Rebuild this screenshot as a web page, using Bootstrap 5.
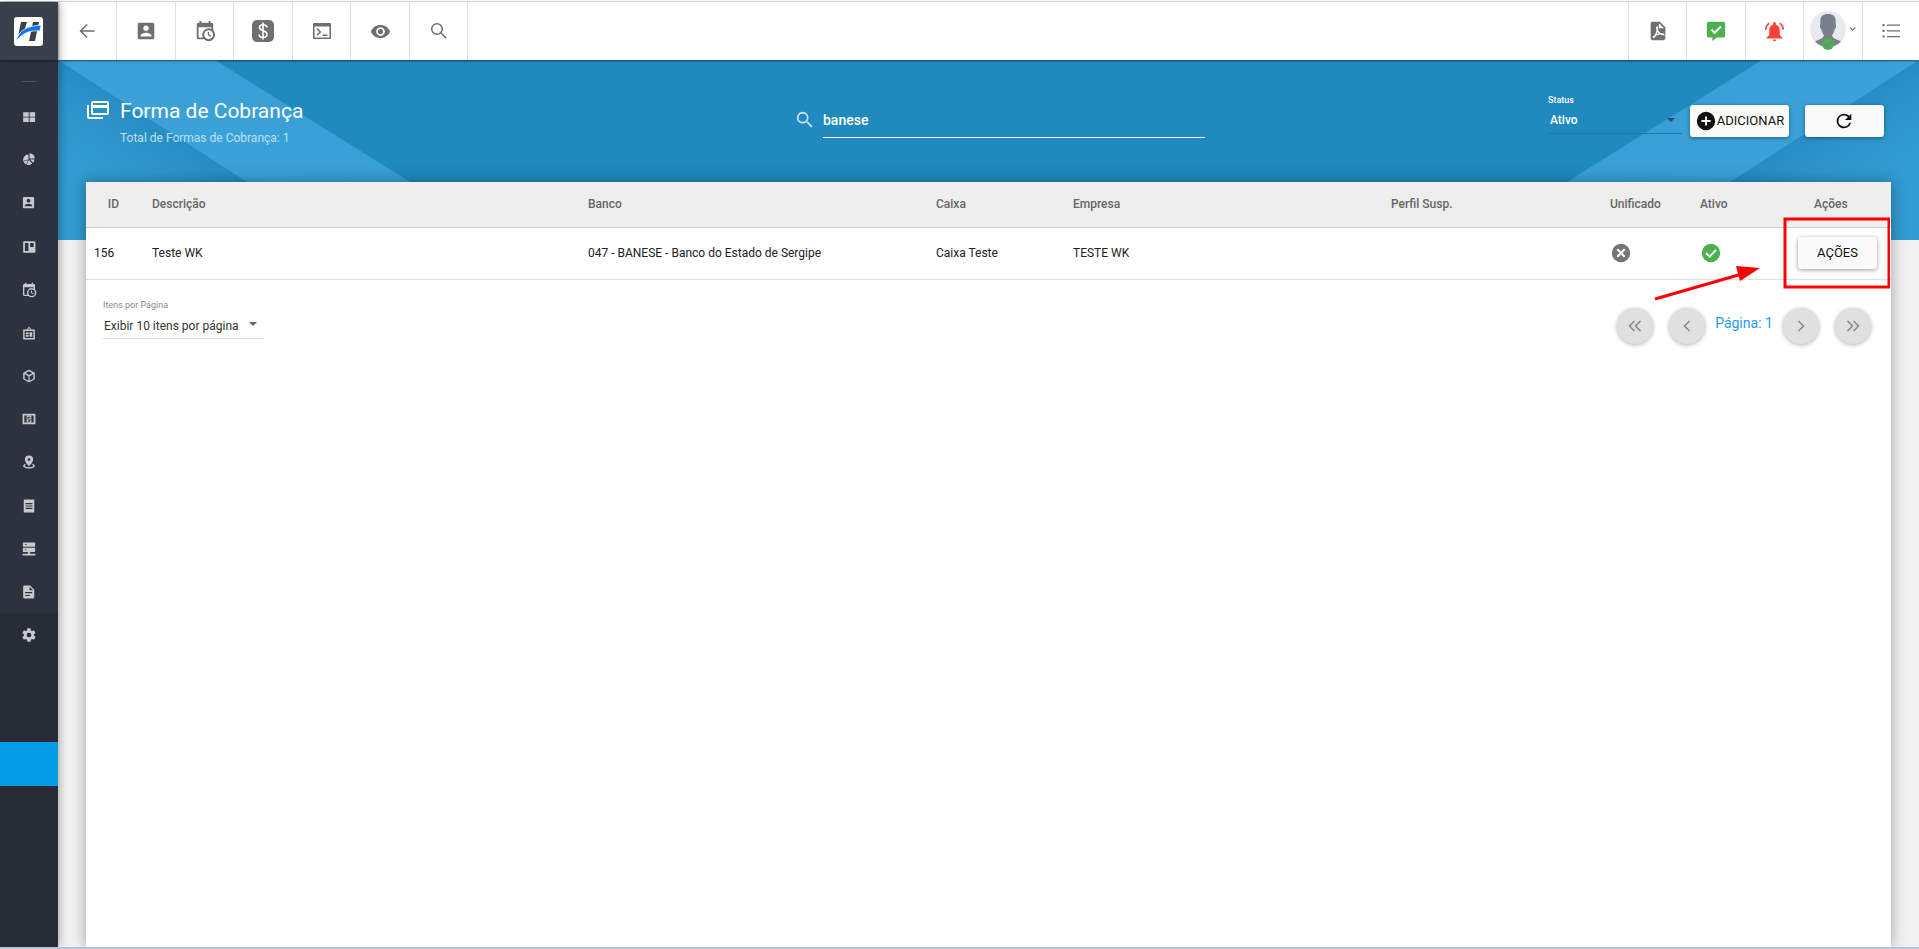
<!DOCTYPE html>
<html lang="pt-BR">
<head>
<meta charset="utf-8">
<meta name="viewport" content="width=device-width, initial-scale=1">
<title>Forma de Cobrança</title>
<link href="https://cdn.jsdelivr.net/npm/bootstrap@5.3.0/dist/css/bootstrap.min.css" rel="stylesheet">
<style>
  body { font-family: Roboto, "Liberation Sans", sans-serif; font-size: 12px; line-height: 16px; color: #212121; background: #f2f2f2; border-top: 1px solid #fafafa; border-bottom: 2px solid #b4c6d6; }
  .app-shell { border-top: 1px solid #dedede; }
  svg { fill: currentColor; display: block; flex: none; }
  .side-rail { width: 58px; background: #2d323e; box-shadow: 0 0 10px rgba(0,0,0,.4); z-index: 3; }
  .side-brand { height: 58px; padding-right: 2px; background: #393f4b; box-shadow: 0 1px 3px rgba(0,0,0,.5); color: #3c3f44; }
  .side-rule { width: 14px; border-top: 1px solid #50545f; margin: 21px auto 13px; }
  .side-link { height: 43px; color: #c8c9cf; padding-right: 1px; }
  .side-group { padding-top: 1px; }
  .side-bottom { background: #282c37; }
  .side-active { background: #039be5; margin-top: 86px; height: 44px; }
  .top-bar { height: 58px; background: #fff; box-shadow: 0 1px 2px rgba(0,0,0,.5); z-index: 2; }
  .tool-btn { width: 58px; border: 0; border-right: 1px solid #e0e0e0; background: none; color: #6f6f6f; padding: 0; }
  .tool-btn.wide { width: 59px; }
  .tool-end .tool-btn { border-right: 0; border-left: 1px solid #e0e0e0; }
  .tool-end .tool-btn:last-child { width: 57px; }
  .hero { height: 180px; background: #2089be; color: #fff; margin-bottom: -58px; padding: 0 35px 0 28px; overflow: hidden; }
  .hero-art { height: 180px; width: 560px; top: 0; }
  .hero-icon { margin: 17px 7px 0 1px; }
  .hero-title { font-size: 21px; line-height: 30px; font-weight: 400; }
  .hero-sub { color: #bfe0f2; line-height: 16px; }
  .search-wrap { padding: 26px 0 0 30px; }
  .search-box { width: 382px; height: 36px; background: none; border: 0; border-bottom: 1px solid #fff; color: #fff; font-size: 14px; font-weight: 500; padding: 0; outline: 0; }
  .field-select { appearance: none; border: 0; background: none; font-size: 12px; line-height: 20px; outline: 0; padding: 0; }
  .status-field { width: 134px; font-size: 9px; line-height: 12px; padding-top: 5px; }
  .status-field .field-select { color: #fff; height: 25px; font-weight: 500; padding: 0 0 2px 2px; margin-top: 3px; border-bottom: 1px solid #1d7cab; border-radius: 0; }
  .status-field .caret { top: 29px; }
  .hero-actions { padding-top: 29px; }
  .raised { background: #fafafa; border: 0; border-radius: 3px; color: #111; box-shadow: 0 1px 4px rgba(0,0,0,.4); padding: 0; height: 32px; font-size: 13px; }
  .raised.short { width: 79px; }
  .raised.long { width: 99px; }
  .panel { background: #fff; margin: 0 28px; box-shadow: 0 0 14px rgba(0,0,0,.35); z-index: 1; }
  .grid-table { table-layout: fixed; }
  .grid-table th { background: #eee; color: #666; font-weight: 500; height: 45px; padding: 0 8px; border-bottom: 1px solid #d0d0d0; vertical-align: middle; }
  .grid-table th:first-child { padding-right: 25px; }
  .grid-table th, .grid-table td { white-space: nowrap; }
  .grid-table td { height: 52px; padding: 0 8px; border-bottom: 1px solid #e0e0e0; vertical-align: middle; }
  .page-size { width: 161px; color: #8a8a8a; font-size: 9px; line-height: 10px; margin: 20px 0 0 17px; }
  .page-size .field-select { color: #333; height: 29px; padding: 4px 0 0 1px; border-bottom: 1px solid #e0e0e0; border-radius: 0; }
  .page-btn { width: 36px; height: 36px; border: 0; border-radius: 50%; background: #e0e0e0; color: #8c8c8c; box-shadow: 0 1px 4px rgba(0,0,0,.3); padding: 0; }
  .page-no { color: #1e9bf0; font-size: 14px; width: 78px; line-height: 38px; }
  .caret { right: 7px; }
  .callout-art { top: 35px; right: 1px; width: 240px; height: 85px; pointer-events: none; }
</style>
</head>
<body class="d-flex flex-column min-vh-100">
<svg width="0" height="0" class="position-absolute" aria-hidden="true">
  <symbol id="account" viewBox="0 0 24 24"><path d="M3 5v14c0 1.100.9 2 2 2h14c1.100 0 2-.9 2-2V5c0-1.100-.9-2-2-2H5c-1.100 0-2 .9-2 2zm12 4c0 1.660-1.340 3-3 3s-3-1.340-3-3 1.340-3 3-3 3 1.340 3 3zm-9 8c0-2 4-3.100 6-3.100s6 1.100 6 3.100v1H6z"/></symbol>
  <symbol id="calclock" viewBox="0 0 24 24"><path d="M15 13h1.500v2.800l2.400 1.400-.7 1.300-3.200-1.900zM19 8H5v11h4.700A7 7 0 0 1 19 9.700zM5 21a2 2 0 0 1-2-2V5c0-1.100.9-2 2-2h1V1h2v2h8V1h2v2h1a2 2 0 0 1 2 2v6.100A7 7 0 0 1 11.100 21zm11-9.800a4.800 4.800 0 1 0 0 9.700 4.800 4.800 0 0 0 0-9.700z"/></symbol>
</svg>
<div class="app-shell d-flex flex-grow-1">
  <nav class="side-rail d-flex flex-column position-relative flex-shrink-0" aria-label="Menu">
    <a href="#" class="side-brand d-flex align-items-center justify-content-center" aria-label="Início">
      <svg width="29" height="29" viewBox="0 0 29 29"><rect width="29" height="29" rx="3" fill="#fff"/><path d="M7 5h6l-2.500 8-6 4zM19 5h6l-4 19h-6l2-9z" fill="#3c3f44"/><path d="M2 24C5 13 13 9 27 8l-1 6C16 13 9 16 2 24z" fill="#0878f0" stroke="#fff" stroke-width=".7"/></svg>
    </a>
    <div class="side-rule"></div>
    <div>
      <a href="#" class="side-link d-flex align-items-center justify-content-center" aria-label="Painel"><svg width="14" height="14" viewBox="0 0 24 24"><path d="M2 4h9.500v7.500H2zM13 4h9.500v7.500H13zM2 13h9.500v7.500H2zM13 13h9.500v7.500H13z"/></svg></a>
      <a href="#" class="side-link d-flex align-items-center justify-content-center" aria-label="Gráficos"><svg width="13" height="13" viewBox="0 0 24 24"><path d="M12 3v9.500l6.700 6.700A9.600 9.600 0 1 1 12 3z"/><path d="M14 .500A10 10 0 0 1 23.500 10H14zM14.500 12H23a9 9 0 0 1-2.500 6z"/><path d="M12 12.500L8 22M12 12.500L3 15" stroke="#2d323e" stroke-width="1.200"/></svg></a>
      <a href="#" class="side-link d-flex align-items-center justify-content-center" aria-label="Clientes"><svg width="15" height="15"><use href="#account"/></svg></a>
    </div>
    <div class="side-group">
      <a href="#" class="side-link d-flex align-items-center justify-content-center" aria-label="Quadro"><svg width="14" height="14" viewBox="0 0 24 24"><path fill-rule="evenodd" d="M4 2h17a2 2 0 0 1 2 2v16a2 2 0 0 1-2 2H4a2 2 0 0 1-2-2V4a2 2 0 0 1 2-2zm1 3v14h6V5zm9 0v7h6V5z"/></svg></a>
      <a href="#" class="side-link d-flex align-items-center justify-content-center" aria-label="Agenda"><svg width="16" height="16"><use href="#calclock"/></svg></a>
      <a href="#" class="side-link d-flex align-items-center justify-content-center" aria-label="Crachás"><svg width="14" height="14" viewBox="0 0 24 24"><path fill-rule="evenodd" d="M2 6h6l4-5 4 5h6v17H2zm2.500 2.500v12h15v-12zM12 3.500L10 6h4zM6.500 10.500h5v3h-5zm0 4.500h5v3.500h-5zm6.500-4.500h4.500v8H13z"/></svg></a>
      <a href="#" class="side-link d-flex align-items-center justify-content-center" aria-label="Produtos"><svg width="14" height="14" viewBox="0 0 24 24"><path d="M12 1l10 5.500v11L12 23 2 17.500v-11zM6 7l6 3.200L18 7l-6-3.200zm-1.500 2v7.500L11 20v-7.500zm15 0L13 12.500V20l6.500-3.500z" fill-rule="evenodd"/></svg></a>
      <a href="#" class="side-link d-flex align-items-center justify-content-center" aria-label="Financeiro"><svg width="14" height="14" viewBox="0 0 24 24"><path fill-rule="evenodd" d="M1 3h22v18H1zm3 3v12h16V6z"/><path fill-rule="evenodd" d="M8 6h8v12H8zm3 1.500v1H9.500V13H13v1.500H9.500V16H11v1h2v-1h1.500v-4.500H11V10h3.500V8.500H13v-1z"/></svg></a>
      <a href="#" class="side-link d-flex align-items-center justify-content-center" aria-label="Mapa"><svg width="14" height="14" viewBox="0 0 24 24"><path fill-rule="evenodd" d="M12 1a7 7 0 0 1 7 7c0 4.500-7 11-7 11S5 12.500 5 8a7 7 0 0 1 7-7zm0 4.500a2.300 2.300 0 1 0 0 4.700 2.300 2.300 0 0 0 0-4.700z"/><path d="M6 16c-6 3-1.500 6 6 6s12-3 6-6" fill="none" stroke="currentColor" stroke-width="2.500"/></svg></a>
    </div>
    <div class="side-group">
      <a href="#" class="side-link d-flex align-items-center justify-content-center" aria-label="Recibos"><svg width="14" height="14" viewBox="0 0 24 24"><path fill-rule="evenodd" d="M3 1h18v22H3zm3 6v2h12V7zm0 4v2h12v-2zm0 4v2h12v-2z"/></svg></a>
      <a href="#" class="side-link d-flex align-items-center justify-content-center" aria-label="Servidores"><svg width="14" height="14" viewBox="0 0 24 24"><path fill-rule="evenodd" d="M1.500 1h21v7h-21zM5 4v1h3V4zM1.500 10h21v7H14v3h9v3H1v-3h9v-3H1.500zM5 13v1h3v-1z"/></svg></a>
      <a href="#" class="side-link d-flex align-items-center justify-content-center" aria-label="Documentos"><svg width="14" height="14" viewBox="0 0 24 24"><path fill-rule="evenodd" d="M4 1h10l7 7v13a2 2 0 0 1-2 2H4a2 2 0 0 1-2-2V3a2 2 0 0 1 2-2zm9 2v6h6zM5.500 12v2h12v-2zm0 5v2h8v-2z"/></svg></a>
    </div>
    <div class="side-bottom flex-grow-1">
      <a href="#" class="side-link d-flex align-items-center justify-content-center" aria-label="Configurações"><svg width="16" height="16" viewBox="0 0 24 24"><path d="M19.400 13c.1-.6.100-1.300 0-2l2.100-1.600c.2-.2.300-.4.100-.7l-2-3.400c-.1-.2-.4-.3-.6-.2l-2.500 1a7 7 0 0 0-1.700-1l-.4-2.600a.5.5 0 0 0-.5-.5h-4a.5.5 0 0 0-.5.500L9 5.100c-.6.300-1.200.6-1.700 1l-2.500-1c-.2-.1-.5 0-.6.200l-2 3.400c-.1.300 0 .5.100.7L4.400 11c-.1.700-.1 1.400 0 2l-2.100 1.600c-.2.200-.2.400-.1.700l2 3.400c.1.200.4.300.6.200l2.500-1c.5.400 1.100.8 1.700 1l.4 2.600c0 .3.200.5.500.5h4c.3 0 .5-.2.500-.5l.4-2.600c.6-.2 1.200-.6 1.700-1l2.500 1c.2.100.5 0 .6-.2l2-3.400c.2-.3.100-.5-.1-.7zM12 15.500a3.500 3.500 0 1 1 0-7 3.500 3.500 0 0 1 0 7z"/></svg></a>
      <a href="#" class="side-link side-active d-block" aria-label="Selecionado"></a>
    </div>
  </nav>

  <div class="d-flex flex-column flex-grow-1">
    <header class="top-bar d-flex justify-content-between position-relative">
      <div class="d-flex">
        <button class="tool-btn wide d-flex align-items-center justify-content-center" aria-label="Voltar"><svg width="20" height="20" viewBox="0 0 24 24"><path d="M11.500 3.500l1.300 1.300L6.600 11h14.400v1.900H6.600l6.200 6.200-1.300 1.300L3 12z"/></svg></button>
        <button class="tool-btn wide d-flex align-items-center justify-content-center" aria-label="Cliente"><svg width="22" height="22"><use href="#account"/></svg></button>
        <button class="tool-btn d-flex align-items-center justify-content-center" aria-label="Agenda"><svg width="22" height="22"><use href="#calclock"/></svg></button>
        <button class="tool-btn wide d-flex align-items-center justify-content-center" aria-label="Financeiro"><svg width="22" height="22" viewBox="0 0 22 22"><rect width="22" height="22" rx="5"/><path d="M15 7.500C14.500 3.500 7.500 4 7.500 7.600c0 4 7.500 2.400 7.500 6.700 0 3.900-7.500 4.400-8 .2M11 2.500v17" fill="none" stroke="#fff" stroke-width="1.600"/></svg></button>
        <button class="tool-btn d-flex align-items-center justify-content-center" aria-label="Terminal"><svg width="20" height="18" viewBox="0 0 20 18"><path fill-rule="evenodd" d="M2 1h16a1 1 0 0 1 1 1v14a1 1 0 0 1-1 1H2a1 1 0 0 1-1-1V2a1 1 0 0 1 1-1zm.6 3.500v11h14.800v-11z"/><path d="M5 6.500L8.300 10 5 13.300M10.500 13.300h5" fill="none" stroke="currentColor" stroke-width="1.600"/></svg></button>
        <button class="tool-btn wide d-flex align-items-center justify-content-center" aria-label="Visualizar"><svg width="21" height="21" viewBox="0 0 24 24"><path d="M12 4.500C7 4.500 2.700 7.600 1 12c1.700 4.400 6 7.500 11 7.500s9.300-3.100 11-7.500c-1.700-4.400-6-7.500-11-7.500zM12 17a5 5 0 1 1 0-10 5 5 0 0 1 0 10zm0-8a3 3 0 1 0 0 6 3 3 0 0 0 0-6z"/></svg></button>
        <button class="tool-btn d-flex align-items-center justify-content-center" aria-label="Pesquisar"><svg width="18" height="18" viewBox="0 0 18 18"><g fill="none" stroke="currentColor" stroke-width="1.500"><circle cx="7" cy="7" r="5.300"/><path d="M10.700 10.700l5.600 5.600"/></g></svg></button>
      </div>
      <div class="tool-end d-flex">
        <button class="tool-btn d-flex align-items-center justify-content-center" aria-label="PDF"><svg width="22" height="22" viewBox="0 0 24 24"><path fill-rule="evenodd" d="M14 2l6 6v12a2 2 0 0 1-2 2H6a2 2 0 0 1-2-2V4c0-1.100.9-2 2-2zm-1 1.500V9h5.500z"/><path d="M6.500 19.500c2.500-1 6-8.500 4.700-12-1.700 0 .5 8.500 7 8.500-1.500-2-7-1-11.700 2.500" fill="none" stroke="#fff" stroke-width="1.500"/></svg></button>
        <button class="tool-btn wide d-flex align-items-center justify-content-center" aria-label="Mensagens"><svg width="22" height="22" viewBox="0 0 24 24"><path fill="#4caf50" d="M4 2h16a2 2 0 0 1 2 2v13a2 2 0 0 1-2 2h-7l-5 4v-4H4a2 2 0 0 1-2-2V4a2 2 0 0 1 2-2z"/><path d="M7 10.500l3.500 3.500L17.500 7" fill="none" stroke="#fff" stroke-width="2.200"/></svg></button>
        <button class="tool-btn d-flex align-items-center justify-content-center" aria-label="Alertas"><svg width="21" height="21" viewBox="0 0 24 24"><path fill="#f44336" d="M18 11v5l3 3v1H3v-1l3-3v-5c0-3.500 1.500-6 4.500-7V2.500a1.500 1.500 0 0 1 3 0V4c3 1 4.500 3.500 4.500 7zM10 21h4a2 2 0 0 1-4 0zM6.500 3L5.300 1.600C2.800 3.400 1 6.500 1 10h2c0-3 1.400-5.500 3.500-7zM17.500 3l1.200-1.400C21.200 3.400 23 6.500 23 10h-2c0-3-1.400-5.500-3.500-7z"/></svg></button>
        <button class="tool-btn wide d-flex align-items-center justify-content-center" aria-label="Usuário"><svg width="46" height="42" viewBox="2 1 46 42"><defs><clipPath id="face"><circle cx="20" cy="20" r="18"/></clipPath></defs><circle cx="20" cy="20" r="18" fill="#e9eaee"/><path clip-path="url(#face)" fill="#78808b" d="M12.500 15C11.500 8 14 5 20 5s8.500 3 7.500 10c1 0 .5 5-1 5.500-.5 3-1.500 4.500-2.500 6 1 4 7 4 13 8v8H3v-8c6-4 12-4 13-8-1-1.500-2-3-2.500-6-1.500-.5-2-5.500-1-5.500z"/><circle cx="20" cy="35" r="6" fill="#4caf50"/><path d="M16.500 35l2.500 2.500 4.500-4.500" fill="none" stroke="#78808b" stroke-width="1.400"/><path d="M42 18.500l2.700 2.700 2.700-2.700" fill="none" stroke="#777" stroke-width="1.200"/></svg></button>
        <button class="tool-btn d-flex align-items-center justify-content-center" aria-label="Lista"><svg width="18" height="16" viewBox="0 0 18 16"><path d="M5 1.500h13v1.300H5zm0 5.700h13v1.300H5zm0 5.700h13v1.300H5zM.5 1h2v2.200h-2zm0 5.700h2v2.200h-2zm0 5.700h2v2.200h-2z"/></svg></button>
      </div>
    </header>

    <section class="hero position-relative">
      <svg class="hero-art position-absolute start-0" viewBox="0 0 560 180"><defs>
        <linearGradient id="shade" gradientUnits="userSpaceOnUse" x1="150" y1="97" x2="105" y2="166"><stop offset="0" stop-color="#268dc4"/><stop offset=".5" stop-color="#2f97cd"/><stop offset="1" stop-color="#329bd1"/></linearGradient>
        <linearGradient id="band" gradientUnits="userSpaceOnUse" x1="180" y1="116" x2="248" y2="12"><stop offset="0" stop-color="#3aa2d9"/><stop offset=".7" stop-color="#38a0d6"/><stop offset="1" stop-color="#3299cf"/></linearGradient></defs>
        <path fill="url(#shade)" d="M0 0l279 180H0z"/><path fill="url(#band)" d="M0 0h157l288 180H279z"/></svg>
      <svg class="hero-art position-absolute end-0" viewBox="0 0 560 180"><g transform="translate(560) scale(-1 1)"><path fill="url(#shade)" d="M0 0l279 180H0z"/><path fill="url(#band)" d="M0 0h157l288 180H279z"/></g></svg>
      <div class="row g-0 position-relative">
        <div class="col-4 d-flex pt-4">
          <svg width="22" height="18" viewBox="0 0 22 18" class="hero-icon"><path fill-rule="evenodd" d="M6 0h14a2 2 0 0 1 2 2v10a2 2 0 0 1-2 2H6a2 2 0 0 1-2-2V2a2 2 0 0 1 2-2zm0 2v2h14V2zm0 5v5h14V7zM0 4h2v12h14v2H2a2 2 0 0 1-2-2z"/></svg>
          <div class="pt-2 ps-1">
            <h1 class="hero-title m-0 pt-1">Forma de Cobrança</h1>
            <div class="hero-sub pt-1">Total de Formas de Cobrança: 1</div>
          </div>
        </div>
        <div class="search-wrap col-4 d-flex justify-content-center">
          <label for="busca" class="pt-4 pe-2 opacity-75" aria-label="Busca"><svg width="20" height="20" viewBox="0 0 24 24"><path d="M15.500 14h-.8l-.3-.3a6.500 6.500 0 1 0-.7.700l.3.300v.8l5 5 1.500-1.500zm-6 0a4.500 4.500 0 1 1 0-9 4.500 4.500 0 0 1 0 9z" transform="translate(-1 -1) scale(1.080)"/></svg></label>
          <input id="busca" class="search-box mt-3" value="banese">
        </div>
        <div class="hero-actions col-4 d-flex justify-content-end">
          <div class="d-flex align-items-start">
            <div class="status-field position-relative me-2"><label for="status" class="d-block fw-medium">Status</label>
              <select id="status" class="field-select w-100"><option>Ativo</option></select>
              <svg class="caret position-absolute" width="8" height="4" viewBox="0 0 8 4"><path fill="#14516f" d="M0 0h8L4 4z"/></svg></div>
            <button class="raised long d-flex align-items-center justify-content-center mt-3"><svg width="22" height="22" viewBox="0 0 24 24"><path d="M12 2a10 10 0 1 0 0 20 10 10 0 0 0 0-20zm5 11h-4v4h-2v-4H7v-2h4V7h2v4h4z"/></svg>ADICIONAR</button>
            <button class="raised short d-flex align-items-center justify-content-center mt-3 ms-3" aria-label="Atualizar"><svg width="22" height="22" viewBox="0 0 24 24"><path d="M17.650 6.350A8 8 0 1 0 19.730 14h-2.080A6 6 0 1 1 12 6c1.660 0 3.140.69 4.220 1.780L13 11h7V4z"/></svg></button>
          </div>
        </div>
      </div>
    </section>

    <main class="panel flex-grow-1 position-relative">
      <table class="grid-table w-100">
        <colgroup><col style="width:58px"><col style="width:436px"><col style="width:348px"><col style="width:137px"><col style="width:318px"><col style="width:219px"><col style="width:90px"><col style="width:106px"><col style="width:93px"></colgroup>
        <thead><tr><th class="text-end">ID</th><th>Descrição</th><th>Banco</th><th>Caixa</th><th>Empresa</th><th>Perfil Susp.</th><th>Unificado</th><th>Ativo</th><th class="ps-3">Ações</th></tr></thead>
        <tbody><tr><td>156</td><td>Teste WK</td><td>047 - BANESE - Banco do Estado de Sergipe</td><td>Caixa Teste</td><td>TESTE WK</td><td></td>
          <td><svg width="22" height="22" viewBox="0 0 24 24"><circle cx="12" cy="12" r="10" fill="#757575"/><path d="M8 8l8 8M16 8l-8 8" stroke="#fff" stroke-width="2.200"/></svg></td>
          <td><svg width="22" height="22" viewBox="0 0 24 24"><circle cx="12" cy="12" r="10" fill="#4caf50"/><path d="M6.500 12l4 4 7-7.500" fill="none" stroke="#fff" stroke-width="2"/></svg></td>
          <td class="p-0"><button class="raised short">AÇÕES</button></td></tr></tbody>
      </table>
      <div class="d-flex justify-content-between">
        <div class="page-size position-relative"><label for="itens" class="d-block">Itens por Página</label>
          <select id="itens" class="field-select w-100"><option>Exibir 10 itens por página</option></select>
          <svg class="caret position-absolute top-50" width="8" height="4" viewBox="0 0 8 4"><path d="M0 0h8L4 4z" fill="#666"/></svg></div>
        <div class="d-flex align-items-start pt-4 pe-3 me-1">
          <button class="page-btn d-flex align-items-center justify-content-center mt-1" aria-label="Primeira"><svg width="14" height="12" viewBox="0 0 14 12"><path d="M6.500 1l-5 5 5 5M12.500 1l-5 5 5 5" fill="none" stroke="currentColor" stroke-width="1.700"/></svg></button>
          <button class="page-btn d-flex align-items-center justify-content-center mt-1 ms-3" aria-label="Anterior"><svg width="8" height="12" viewBox="0 0 8 12"><path d="M6.500 1l-5 5 5 5" fill="none" stroke="currentColor" stroke-width="1.700"/></svg></button>
          <span class="page-no text-center">Página: 1</span>
          <button class="page-btn d-flex align-items-center justify-content-center mt-1" aria-label="Próxima"><svg width="8" height="12" viewBox="0 0 8 12"><path d="M1.500 1l5 5-5 5" fill="none" stroke="currentColor" stroke-width="1.700"/></svg></button>
          <button class="page-btn d-flex align-items-center justify-content-center mt-1 ms-3" aria-label="Última"><svg width="14" height="12" viewBox="0 0 14 12"><path d="M1.500 1l5 5-5 5M7.500 1l5 5-5 5" fill="none" stroke="currentColor" stroke-width="1.700"/></svg></button>
        </div>
      </div>
      <svg class="callout-art position-absolute" viewBox="0 0 240 85"><rect x="135" y="2" width="104" height="68" fill="none" stroke="#f00" stroke-width="3"/><path d="M5 82L92 57" stroke="#f00" stroke-width="3"/><path d="M86 49l24 2-20 13z" fill="#f00"/></svg>
    </main>
  </div>
</div>
<script src="https://cdn.jsdelivr.net/npm/bootstrap@5.3.0/dist/js/bootstrap.bundle.min.js"></script>
</body>
</html>
